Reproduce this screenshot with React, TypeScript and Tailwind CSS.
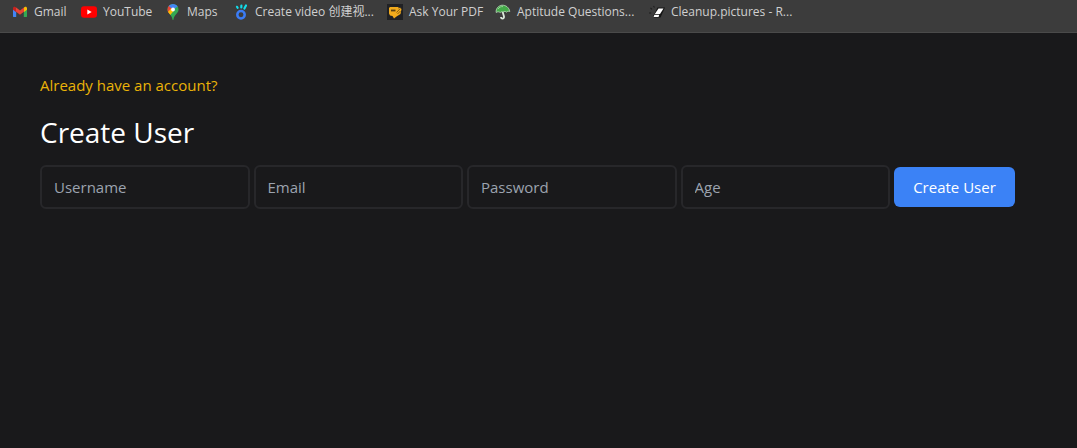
import type { ReactNode } from "react";

function GmailIcon() {
  return (
    <svg viewBox="0 0 16 16" className="size-4 shrink-0" aria-hidden="true">
      <path d="M1 4v8.200c0 .5.4.9.9.9H4.200V6z" fill="#4285f4" />
      <path d="M11.800 6v7.100h2.300c.5 0 .9-.4.9-.9V4z" fill="#34a853" />
      <path d="M3.800 3.200v4.400L8 10.800l4.200-3.200V3.200L8 6.400z" fill="#ea4335" />
      <path d="M1 4.200v1.500l3 2.200V3.500l-.7-.5C2.300 2.200 1 3 1 4.200z" fill="#c5221f" />
      <path d="M15 4.200v1.500l-3 2.200V3.500l.7-.5c1-.8 2.300-.1 2.300 1.200z" fill="#fbbc04" />
    </svg>
  );
}

function YouTubeIcon() {
  return (
    <svg viewBox="0 0 16 16" className="size-4 shrink-0" aria-hidden="true">
      <rect x="0" y="2.300" width="16" height="11.400" rx="3" fill="#ff0000" />
      <path d="M6.300 5.500v5L10.700 8z" fill="#fff" />
    </svg>
  );
}

function MapsIcon() {
  return (
    <svg viewBox="0 0 16 16" className="size-4 shrink-0" aria-hidden="true">
      <clipPath id="pin">
        <path d="M8 0a5.500 5.500 0 0 0-5.500 5.500C2.500 9.600 6.700 10.500 7.400 15c.1.800.2 1 .6 1s.5-.2.6-1c.7-4.500 4.900-5.400 4.900-9.500A5.500 5.500 0 0 0 8 0z" />
      </clipPath>
      <g clipPath="url(#pin)">
        <rect width="16" height="16" fill="#34a853" />
        <path d="M0 0h5l3 5.500L3.500 11H0z" fill="#ea4335" />
        <path d="M3.700 2 8 5.500 13.500 2V0H5z" fill="#4285f4" />
        <path d="M2 9 6 4.500 9 6.500 4.500 12z" fill="#fbbc04" />
      </g>
      <circle cx="8" cy="5.500" r="1.900" fill="#fff" />
    </svg>
  );
}

function VideoIcon() {
  return (
    <svg viewBox="0 0 16 16" className="size-4 shrink-0" fill="none" aria-hidden="true">
      <circle cx="8" cy="10.700" r="3.700" stroke="#3b7cf5" strokeWidth="2.500" />
      <g stroke="#12dcea" strokeWidth="2.200" strokeLinecap="round">
        <path d="m4 2.800.6 1" />
        <path d="M8.400 1.600 8.300 3.500" />
        <path d="m13 1.500-1.600 3" />
      </g>
    </svg>
  );
}

function AskPdfIcon() {
  return (
    <svg viewBox="0 0 16 16" className="size-4 shrink-0" aria-hidden="true">
      <rect width="16" height="16" fill="#202124" />
      <path d="M3 3h8.500v1.500L13 3.500l1.500 1.500-1 5-4 2.500L7 14.500 5.500 12 3 11.500 2 9.500V4z" fill="#f2ab1d" />
      <path d="M4 6.500h4.500" stroke="#5a4012" strokeWidth="1.800" />
      <path d="m9.500 8.500 3.800-4M10.500 10l3-3" stroke="#6b4b12" strokeWidth=".8" />
    </svg>
  );
}

function UmbrellaIcon() {
  return (
    <svg viewBox="0 0 16 16" className="size-4 shrink-0" aria-hidden="true">
      <path d="M7.500 7.500 9 12.500c.2 1.300-.5 2.200-1.500 2.200S6 14 6 13" fill="none" stroke="#dce9dd" strokeWidth="1.800" />
      <path d="M1.200 8.500C.5 4.800 3.500 1.500 7 1.200c4-.2 7.200 2.500 7.800 6.300-1.200-.6-2.500-.3-3.300.7-1-1-2.200-1-3.500 0-1-.8-2-.5-2.800.5-1-1.200-2.800-1.100-4-.2z" fill="#43aa48" stroke="#cfe6cf" strokeWidth=".7" />
      <path d="M3 5.200c1-2 3-2.800 5-2.600" fill="none" stroke="#93d294" strokeWidth="1" />
    </svg>
  );
}

function EraserIcon() {
  return (
    <svg viewBox="0 0 16 16" className="size-4 shrink-0" aria-hidden="true">
      <path d="M8.500 3.500H16L11.500 13.500H5l-.5-2z" fill="#141414" />
      <path d="M9.500 4.500h5L11 10H5.800z" fill="#fff" />
      <path d="M5.300 10.700h5L9.500 13H4.700z" fill="#fff" />
      <path d="m4.500 2 1 1.500M1.500 4l1.500 1.300M0 9h2.200" stroke="#1d1d1d" strokeWidth="1.100" />
    </svg>
  );
}

type BookmarkProps = { label: string; icon: ReactNode; width: string };

const bookmarks: BookmarkProps[] = [
  { label: "Gmail", icon: <GmailIcon />, width: "w-[69px]" },
  { label: "YouTube", icon: <YouTubeIcon />, width: "w-[84px]" },
  { label: "Maps", icon: <MapsIcon />, width: "w-[68px]" },
  { label: "Create video 创建视...", icon: <VideoIcon />, width: "w-[154px]" },
  { label: "Ask Your PDF", icon: <AskPdfIcon />, width: "w-[108px]" },
  { label: "Aptitude Questions...", icon: <UmbrellaIcon />, width: "w-[154px]" },
  { label: "Cleanup.pictures - R...", icon: <EraserIcon />, width: "w-[154px]" },
];

function Bookmark({ label, icon, width }: BookmarkProps) {
  return (
    <a href="#" className={`flex shrink-0 items-center gap-1.5 whitespace-nowrap ${width}`}>
      {icon}
      <span>{label}</span>
    </a>
  );
}

const fields = [
  { label: "Username", type: "text" },
  { label: "Email", type: "email" },
  { label: "Password", type: "password" },
  { label: "Age", type: "number" },
];

export default function App() {
  return (
    <div className="min-h-screen bg-[#19191b] font-['Open_Sans','Noto_Sans_CJK_SC',sans-serif] text-white">
      <nav
        aria-label="Bookmarks"
        className="flex overflow-hidden border-b border-[#4a4a4a] bg-[#3c3c3c] px-3 pt-1 pb-3 text-xs text-[#d0d0d0]"
      >
        {bookmarks.map((b) => (
          <Bookmark key={b.label} {...b} />
        ))}
      </nav>
      <main className="p-10">
        <a href="#" className="block text-[15px] leading-6 text-[#eab308]">
          Already have an account?
        </a>
        <h1 className="mt-4 text-[28px] leading-[38px]">Create User</h1>
        <form className="mt-3.5 flex max-w-[975px] items-center gap-1" onSubmit={(e) => e.preventDefault()}>
          {fields.map((f) => (
            <input
              key={f.label}
              type={f.type}
              aria-label={f.label}
              placeholder={f.label}
              className="h-11 min-w-0 flex-1 rounded-md border-2 border-[#27272a] bg-transparent px-3 text-[15px] placeholder:text-[#9ca3af]"
            />
          ))}
          <button type="submit" className="h-10 w-[121px] shrink-0 rounded-md bg-[#3b82f6] text-[15px] whitespace-nowrap">
            Create User
          </button>
        </form>
      </main>
    </div>
  );
}
